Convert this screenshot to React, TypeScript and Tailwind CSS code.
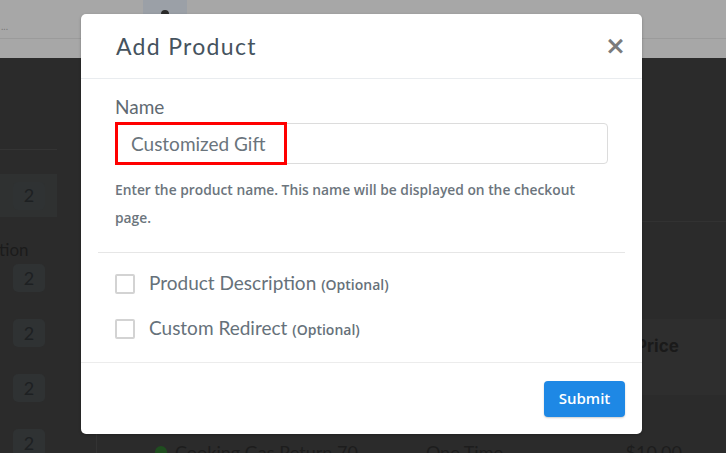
import { useState } from "react";

function Badge({ n }: { n: number }) {
    return (
        <div className="w-[32px] h-[28px] rounded-[5px] bg-[#2f3233] text-[#1d2022] flex items-center justify-center text-[18px]">{n}</div>
    );
}

function Backdrop() {
    return (
        <div className="absolute inset-0 flex flex-col">
            <div className="h-[58px] shrink-0 bg-[#a7a7a7] relative">
                <div className="h-[39px] border-b border-[#9b9b9b] flex items-end">
                    <span className="text-[#7a7a7a] text-[10px] leading-[24px] pl-[1px]">...</span>
                </div>
                <div className="absolute left-[143px] top-0 w-[44px] h-[14px] bg-[#9ba0a7] flex justify-center">
                    <div className="w-[8px] h-[4px] mt-[10px] rounded-t-full bg-[#2a2a2a]"></div>
                </div>
            </div>
            <div className="flex-1 min-h-0 overflow-hidden bg-[#2b2b2b] flex">
                <div className="w-[57px] shrink-0 flex flex-col">
                    <div className="h-[92px] shrink-0 border-b border-[#343434]"></div>
                    <div className="h-[24px] shrink-0"></div>
                    <div className="h-[43px] shrink-0 bg-[#2f3131] flex items-center pl-[13px]"><Badge n={2} /></div>
                    <div className="h-[43px] shrink-0 flex items-end text-[17px] text-[#1b1b1b] leading-[20px] -ml-[1px]">tion</div>
                    <div className="flex flex-col gap-[27px] pl-[13px] pt-[4px]">
                        <Badge n={2} />
                        <Badge n={2} />
                        <Badge n={2} />
                        <Badge n={2} />
                    </div>
                </div>
                <div className="w-[40px] shrink-0 border-r border-[#333]"></div>
                <div className="flex-1 flex flex-col">
                    <div className="h-[164px] shrink-0 border-b border-[#323232]"></div>
                    <div className="h-[97px] shrink-0"></div>
                    <div className="h-[76px] shrink-0 bg-[#2e2e2e] flex pl-[539px] pt-[15px]">
                        <span className="text-[17px] font-bold text-[#1a1a1a]" style={{ fontFamily: "Inter, sans-serif" }}>Price</span>
                    </div>
                    <div className="flex items-center gap-[8px] pl-[58px] pt-[46px] text-[18px] leading-[22px] text-[#1d1d1d]">
                        <span className="w-[12px] h-[12px] rounded-full bg-[#1f4d1f]"></span>
                        <span>Cooking Gas Return 70</span>
                        <span className="ml-[60px]">One Time</span>
                        <span className="ml-auto mr-[44px]">$10.00</span>
                    </div>
                </div>
            </div>
        </div>
    );
}

function OptionRow({ label }: { label: string }) {
    const [checked, setChecked] = useState(false);
    return (
        <label className="flex items-center gap-[14px] h-[25px] cursor-pointer">
            <input
                type="checkbox"
                checked={checked}
                onChange={() => setChecked(!checked)}
                className="appearance-none w-[20px] h-[20px] border-2 border-[#d3d3d3] rounded-[2px] bg-white"
            />
            <span className="text-[19px] text-[#66717a]" style={{ fontFamily: "Lato, sans-serif" }}>
                {label} <span className="text-[14px] font-semibold" style={{ fontFamily: "'Open Sans', sans-serif" }}>(Optional)</span>
            </span>
        </label>
    );
}

export default function App() {
    const [name, setName] = useState("Customized Gift");
    return (
        <div className="relative w-[726px] h-[453px] overflow-hidden" style={{ fontFamily: "Lato, sans-serif" }}>
            <Backdrop />
            <div className="absolute left-[81px] top-[14px] w-[561px] h-[420px] bg-white rounded-[5px] flex flex-col shadow-[0_1px_3px_rgba(0,0,0,0.25)]">
                <div className="h-[65px] border-b border-[#e9ecef] flex items-center justify-between pl-[35px] pr-[16px] shrink-0">
                    <h2 className="text-[23px] text-[#46535e] tracking-[1.3px]">Add Product</h2>
                    <button className="text-[#7b7b7b] text-[25px] font-bold leading-none pb-[2px]" style={{ fontFamily: "'DejaVu Sans', sans-serif" }}>×</button>
                </div>
                <div className="px-[34px] pt-[16px]">
                    <div className="text-[19px] text-[#5f6a72] leading-[24px]">Name</div>
                    <div className="relative mt-[4px]">
                        <input
                            value={name}
                            onChange={e => setName(e.target.value)}
                            className="w-[493px] h-[41px] border border-[#dcdcdc] rounded-[4px] px-[15px] text-[19px] text-[#6a747c] outline-none"
                            style={{ fontFamily: "Lato, sans-serif" }}
                        />
                        <div className="absolute left-0 top-[-1px] w-[172px] h-[43px] border-[3px] border-[#ff0000] pointer-events-none"></div>
                    </div>
                    <p className="mt-[12px] w-[470px] text-[13.8px] leading-[28px] font-semibold text-[#6c757d]" style={{ fontFamily: "'Open Sans', sans-serif" }}>
                        Enter the product name. This name will be displayed on the checkout page.
                    </p>
                </div>
                <div className="mx-[17px] mt-[20px] border-t border-[#e6e6e6]"></div>
                <div className="px-[34px] pt-[18px] flex flex-col gap-[20px]">
                    <OptionRow label="Product Description" />
                    <OptionRow label="Custom Redirect" />
                </div>
                <div className="mt-auto h-[72px] border-t border-[#ececec] flex items-center justify-end pr-[17px]">
                    <button className="w-[81px] h-[36px] rounded-[4px] bg-[#1e88e5] text-white text-[15px] font-semibold shadow-[0_1px_2px_rgba(0,0,0,0.2)]" style={{ fontFamily: "'Open Sans', sans-serif" }}>Submit</button>
                </div>
            </div>
        </div>
    );
}
